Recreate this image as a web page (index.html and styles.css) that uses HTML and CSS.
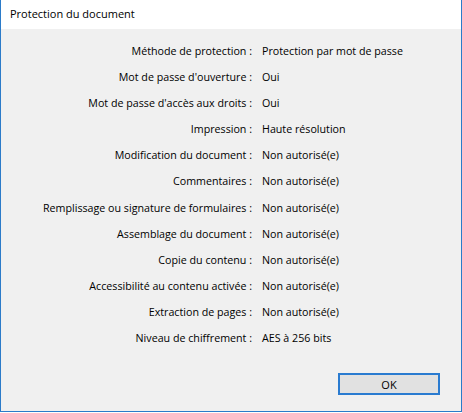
FILE: index.html
```html
<!DOCTYPE html>
<html lang="fr">
<head>
  <meta charset="UTF-8">
  <title>Protection du document</title>
  <link rel="stylesheet" href="styles.css">
</head>
<body>
  <div class="dialog">
    <div class="titlebar">Protection du document</div>
    <div class="content">
      <div class="props">
        <div class="label">Méthode de protection :</div><div class="value">Protection par mot de passe</div>
        <div class="label">Mot de passe d'ouverture :</div><div class="value">Oui</div>
        <div class="label">Mot de passe d'accès aux droits :</div><div class="value">Oui</div>
        <div class="label">Impression :</div><div class="value">Haute résolution</div>
        <div class="label">Modification du document :</div><div class="value">Non autorisé(e)</div>
        <div class="label">Commentaires :</div><div class="value">Non autorisé(e)</div>
        <div class="label">Remplissage ou signature de formulaires :</div><div class="value">Non autorisé(e)</div>
        <div class="label">Assemblage du document :</div><div class="value">Non autorisé(e)</div>
        <div class="label">Copie du contenu :</div><div class="value">Non autorisé(e)</div>
        <div class="label">Accessibilité au contenu activée :</div><div class="value">Non autorisé(e)</div>
        <div class="label">Extraction de pages :</div><div class="value">Non autorisé(e)</div>
        <div class="label">Niveau de chiffrement :</div><div class="value">AES à 256 bits</div>
      </div>
      <div class="buttons">
        <button class="btn">OK</button>
      </div>
    </div>
  </div>
</body>
</html>
```

FILE: styles.css
```css
body {
  margin: 0;
  font-family: "Open Sans", "Noto Sans", sans-serif;
  font-size: 10.7px;
  color: #000;
  background: #fff;
}
.dialog {
  width: 460px;
  height: 411px;
  border: 1px solid #2b7bc9;
  border-top: none;
  background: #f0f0f0;
  display: flex;
  flex-direction: column;
}
.titlebar {
  height: 29px;
  line-height: 28px;
  padding-left: 9px;
  background: #fff;
  font-size: 11px;
}
.content {
  flex: 1;
  padding-top: 9px;
}
.props {
  display: grid;
  grid-template-columns: 251px 1fr;
  column-gap: 10px;
  grid-auto-rows: 26.1px;
  line-height: 26px;
}
.label {
  text-align: right;
}
.buttons {
  display: flex;
  justify-content: flex-end;
  padding-right: 21px;
  margin-top: 22px;
}
.btn {
  width: 102px;
  height: 22px;
  border: 2px solid #2a7bd0;
  background: #e1e1e1;
  font-family: inherit;
  font-size: 11px;
  color: #000;
  padding: 0;
}
```
